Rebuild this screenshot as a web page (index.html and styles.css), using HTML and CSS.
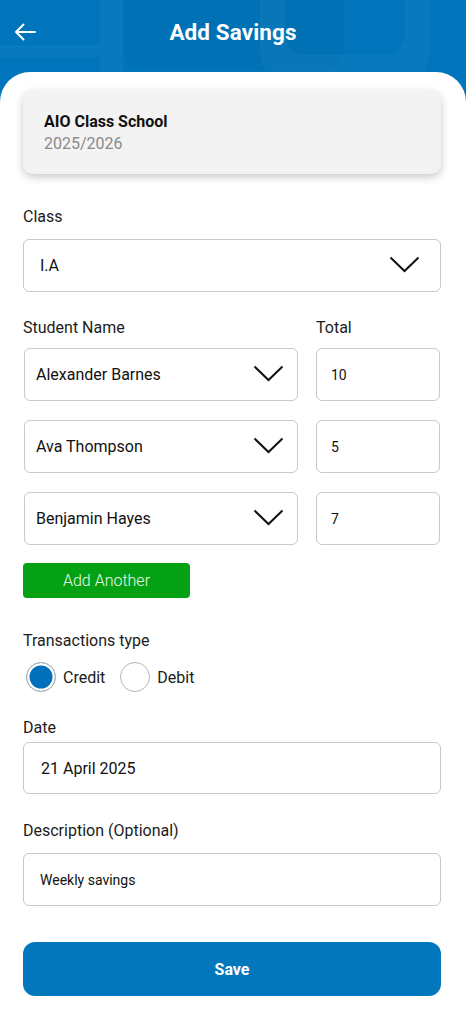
FILE: index.html
```html
<!DOCTYPE html>
<html lang="en">
<head>
<meta charset="utf-8">
<title>Add Savings</title>
<link rel="stylesheet" href="styles.css">
</head>
<body>
<div class="page">
  <header class="topbar">
    <svg class="decor" width="466" height="110" viewBox="0 0 466 110" aria-hidden="true">
      <rect x="0" y="45" width="100" height="12" fill="rgba(255,255,255,0.035)"/>
      <rect x="100" y="-10" width="23" height="120" fill="rgba(255,255,255,0.035)"/>
      <rect x="123" y="-30" width="222" height="100" rx="22" fill="rgba(0,0,0,0.03)"/>
      <path d="M260 -10 H430 V50 a45 45 0 0 1 -45 45 H305 a45 45 0 0 1 -45 -45 Z M285 -10 V35 a20 20 0 0 0 20 20 H385 a20 20 0 0 0 20 -20 V-10 Z" fill="rgba(255,255,255,0.035)" fill-rule="evenodd"/>
    </svg>
    <button class="back" aria-label="Back">
      <svg width="22" height="18" viewBox="0 0 22 18"><path d="M21 9H2M9.5 1.5L2 9l7.5 7.5" fill="none" stroke="#fff" stroke-width="2" stroke-linecap="round" stroke-linejoin="round"/></svg>
    </button>
    <h1 class="title">Add Savings</h1>
  </header>

  <main class="sheet">
    <section class="school-card">
      <div class="school-name">AIO Class School</div>
      <div class="school-year">2025/2026</div>
    </section>

    <div class="label label-class">Class</div>
    <div class="field select">
      <span>I.A</span>
      <svg class="chev" width="31" height="17" viewBox="0 0 31 17"><path d="M1.5 1.5L15.5 15 29.5 1.5" fill="none" stroke="#111" stroke-width="2"/></svg>
    </div>

    <div class="student-grid">
      <div class="label">Student Name</div>
      <div class="label">Total</div>

      <div class="field select small-chev">
        <span>Alexander Barnes</span>
        <svg class="chev" width="31" height="17" viewBox="0 0 31 17"><path d="M1.5 1.5L15.5 15 29.5 1.5" fill="none" stroke="#111" stroke-width="2"/></svg>
      </div>
      <div class="field total"><span>10</span></div>

      <div class="field select small-chev">
        <span>Ava Thompson</span>
        <svg class="chev" width="31" height="17" viewBox="0 0 31 17"><path d="M1.5 1.5L15.5 15 29.5 1.5" fill="none" stroke="#111" stroke-width="2"/></svg>
      </div>
      <div class="field total"><span>5</span></div>

      <div class="field select small-chev">
        <span>Benjamin Hayes</span>
        <svg class="chev" width="31" height="17" viewBox="0 0 31 17"><path d="M1.5 1.5L15.5 15 29.5 1.5" fill="none" stroke="#111" stroke-width="2"/></svg>
      </div>
      <div class="field total"><span>7</span></div>
    </div>

    <button class="add-btn">Add Another</button>

    <div class="label label-tx">Transactions type</div>
    <div class="radios">
      <label class="radio-item"><span class="radio checked"></span><span>Credit</span></label>
      <label class="radio-item"><span class="radio"></span><span>Debit</span></label>
    </div>

    <div class="label label-date">Date</div>
    <div class="field date"><span>21 April 2025</span></div>

    <div class="label label-desc">Description (Optional)</div>
    <div class="field desc"><span>Weekly savings</span></div>

    <button class="save-btn">Save</button>
  </main>
</div>
</body>
</html>
```
FILE: styles.css
```css
* { box-sizing: border-box; }
html, body { margin: 0; padding: 0; }
body {
  font-family: Roboto, "Noto Sans", "Liberation Sans", sans-serif;
  color: #1a1a1a;
  background: #ffffff;
  width: 466px;
}
.page {
  background: #0175bb;
  position: relative;
  overflow: hidden;
}
.topbar {
  height: 72px;
  position: relative;
  display: flex;
  align-items: center;
  justify-content: center;
}
.decor {
  position: absolute;
  left: 0;
  top: 0;
}
.back {
  position: absolute;
  left: 14px;
  top: 23px;
  background: none;
  border: 0;
  padding: 0;
  width: 22px;
  height: 18px;
  display: flex;
}
.title {
  position: relative;
  margin: 0;
  margin-top: -8px;
  color: #fff;
  font-size: 22.5px;
  font-weight: 700;
  letter-spacing: 0.1px;
}
.sheet {
  position: relative;
  background: #fff;
  border-radius: 30px 30px 0 0;
  padding: 18px 25px 20px 23px;
  display: flex;
  flex-direction: column;
}
.school-card {
  height: 84px;
  background: #f3f3f3;
  border-radius: 10px;
  box-shadow: 0 3px 8px rgba(0,0,0,0.22);
  padding: 21px 21px 0;
}
.school-name {
  font-size: 16px;
  font-weight: 700;
  line-height: 22px;
  color: #111;
}
.school-year {
  font-size: 16px;
  line-height: 22px;
  color: #8a8a8a;
}
.label {
  font-size: 16px;
  line-height: 20px;
  color: #1c1c1c;
}
.label-class { margin-top: 33px; margin-bottom: 12px; }
.field {
  height: 53px;
  border: 1.5px solid #c9c9c9;
  border-radius: 6px;
  display: flex;
  align-items: center;
  justify-content: space-between;
  font-size: 16px;
  color: #111;
  background: #fff;
}
.select { padding: 0 20px 0 16px; }
.select .chev { flex: none; margin-top: -2px; }
.small-chev { padding: 0 13px 0 11px; }
.student-grid {
  margin-top: 26px;
  display: grid;
  grid-template-columns: 275px 1fr;
  column-gap: 18px;
  row-gap: 19px;
}
.student-grid .label { margin-bottom: -9px; }
.student-grid .small-chev { margin-left: 1px; margin-right: 0; }
.total { padding: 0 14px; font-size: 14px; margin-right: 1px; }
.add-btn {
  margin-top: 18px;
  width: 167px;
  height: 35px;
  border: 0;
  border-radius: 4px;
  background: #05a115;
  color: #eafbe9;
  font-family: inherit;
  font-size: 16px;
  font-weight: 300;
  padding: 0;
}
.label-tx { margin-top: 33px; }
.radios {
  margin-top: 11px;
  display: flex;
  align-items: center;
  gap: 15px;
  padding-left: 3px;
  height: 30px;
}
.radio-item {
  display: flex;
  align-items: center;
  gap: 7px;
  font-size: 16px;
  color: #1a1a1a;
}
.radio {
  width: 30px;
  height: 30px;
  border-radius: 50%;
  border: 1.5px solid #b5b5b5;
  background: #fff;
  display: block;
}
.radio.checked {
  background: #0070bb;
  box-shadow: inset 0 0 0 2.5px #fff;
}
.label-date { margin-top: 26px; margin-bottom: 4px; }
.date { height: 52px; padding: 0 17px; }
.label-desc { margin-top: 27px; margin-bottom: 12px; }
.desc { padding: 0 16px; font-size: 14px; }
.save-btn {
  margin-top: 36px;
  height: 54px;
  border: 0;
  border-radius: 12px;
  background: #0277bb;
  color: #fff;
  font-family: inherit;
  font-size: 16px;
  font-weight: 700;
}
```
